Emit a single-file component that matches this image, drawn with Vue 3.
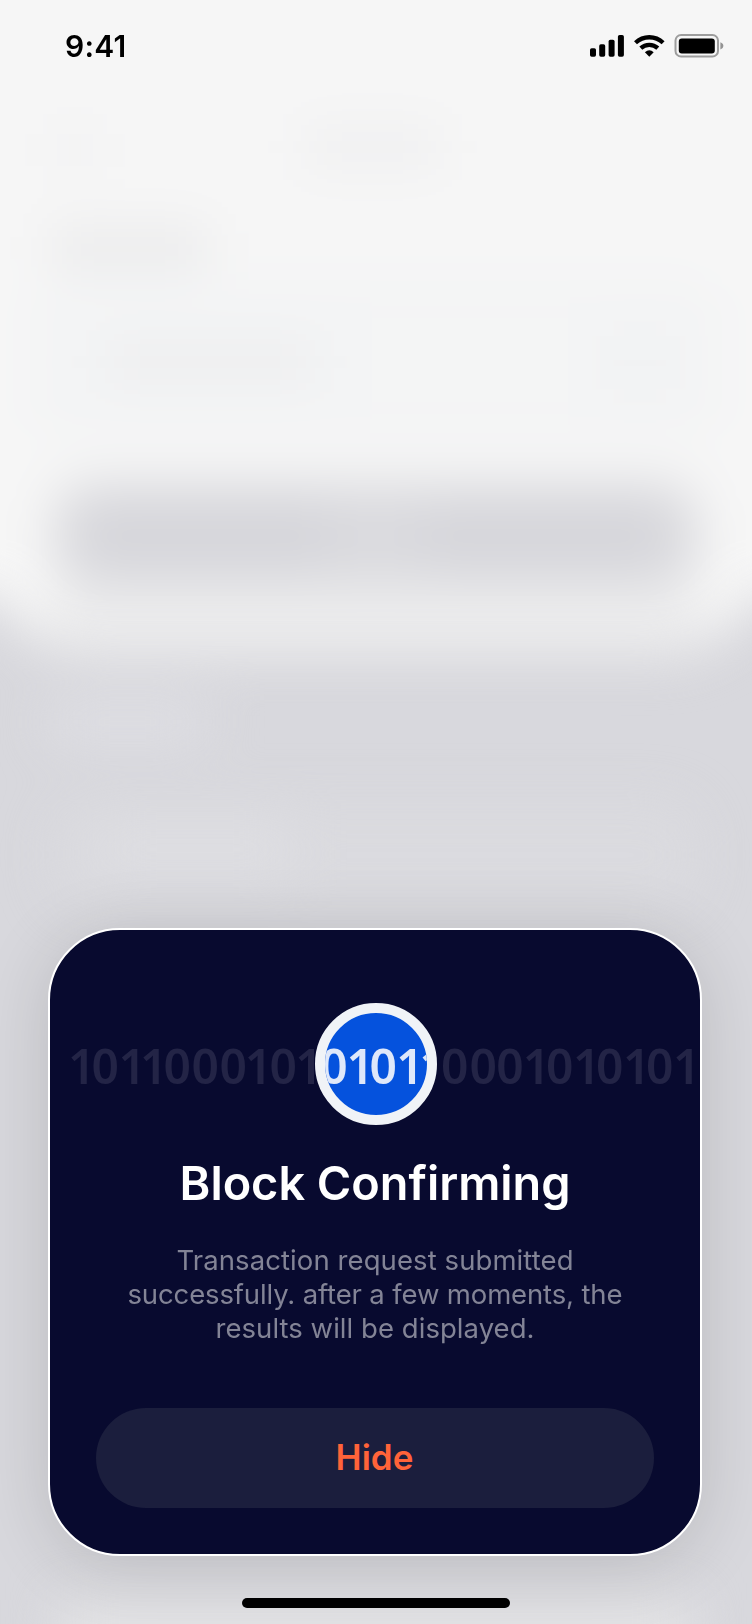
<script setup>
const leading = { text: '1011000101', x: '81.8 105.2 132.2 153.8 177.2 205.2 233.2 258.5 283.2 309' }
const trailing = { text: '0001010101', x: '454.8 483.2 510 536.6 559.8 586.8 609.8 636.8 659.8 686.8' }
const active = { text: '01011', x: '334 360.2 383.2 410 433' }
const lines = [
  { text: 'Transaction request submitted', width: 397 },
  { text: 'successfully. after a few moments, the', width: 495 },
  { text: 'results will be displayed.', width: 319 },
]
</script>

<template>
  <main class="screen">
    <svg class="backdrop" viewBox="0 0 752 1624" aria-hidden="true">
      <defs>
        <filter id="soft" x="-200" y="-200" width="1152" height="2024" filterUnits="userSpaceOnUse" color-interpolation-filters="sRGB">
          <feGaussianBlur stdDeviation="25" />
        </filter>
      </defs>
      <rect width="752" height="1624" fill="#d8d8dd" />
      <g filter="url(#soft)">
        <rect x="-200" y="-200" width="1152" height="700" fill="#f6f6f6" />
        <rect x="-10" y="300" width="772" height="350" rx="85" fill="#f4f4f4" />
        <rect x="-200" y="300" width="1152" height="295" fill="#f6f6f6" />
        <rect x="30" y="280" width="692" height="160" rx="40" fill="#f3f4f5" />
        <rect x="305" y="130" width="135" height="34" fill="#eeeeef" />
        <rect x="58" y="130" width="34" height="40" fill="#f0f0f1" />
        <rect x="52" y="230" width="155" height="36" fill="#e9e9ea" />
        <rect x="105" y="345" width="210" height="34" fill="#ededee" />
        <rect x="370" y="325" width="200" height="70" fill="#f4f5f5" />
        <rect x="620" y="335" width="40" height="56" fill="#f0f0f1" />
        <rect x="46" y="590" width="660" height="66" rx="30" fill="#ececed" />
        <rect x="54" y="484" width="644" height="102" rx="36" fill="#dadade" />
        <rect x="90" y="500" width="240" height="70" rx="30" fill="#d6d6db" />
        <rect x="422" y="500" width="240" height="70" rx="30" fill="#d6d6db" />
        <rect x="50" y="705" width="155" height="34" fill="#e0e0e5" />
        <rect x="100" y="825" width="190" height="44" fill="#dfdfe3" />
        <rect x="50" y="800" width="650" height="110" rx="40" fill="#dddde1" opacity=".5" />
        <rect x="60" y="1600" width="632" height="200" fill="#e3e3e5" />
      </g>
    </svg>

    <header class="status">
      <span class="time">9:41</span>
      <svg class="indicators" width="136" height="26" viewBox="589 33 136 26" aria-hidden="true">
        <rect x="590" y="48.2" width="6" height="8.5" rx="1.7" />
        <rect x="599.2" y="44.2" width="6" height="12.5" rx="1.7" />
        <rect x="608.6" y="39.8" width="6" height="16.9" rx="1.7" />
        <rect x="617.9" y="35" width="6" height="21.7" rx="1.7" />
        <g fill="none" stroke="#000" stroke-width="4.3">
          <path d="M635.5 42.7 A20.2 20.2 0 0 1 663.1 42.7" />
          <path d="M640.8 48.2 A12.5 12.5 0 0 1 657.8 48.2" />
        </g>
        <path d="M649.3 56.8 L644.9 52.3 Q649.3 48.2 653.7 52.3 Z" />
        <rect x="675.5" y="35" width="42.5" height="21.5" rx="5.6" fill="none" stroke="#000" stroke-opacity=".36" stroke-width="2" />
        <rect x="678.8" y="38.4" width="36" height="15" rx="3" />
        <path d="M720.4 42.2 Q723.4 43.3 723.4 45.9 Q723.4 48.4 720.4 49.5 Z" fill-opacity=".4" />
      </svg>
    </header>

    <section class="card">
      <svg class="blocks" width="650" height="126" viewBox="50 1001 650 126">
        <defs>
          <clipPath id="lens"><circle cx="376" cy="1064" r="51" /></clipPath>
        </defs>
        <text class="digits dim" y="1084" :x="leading.x">{{ leading.text }}</text>
        <text class="digits dim" y="1084" :x="trailing.x">{{ trailing.text }}</text>
        <circle cx="376" cy="1064" r="56" fill="#0552dd" stroke="#f0f3f7" stroke-width="10" />
        <g clip-path="url(#lens)">
          <text class="digits bright" y="1084" :x="active.x">{{ active.text }}</text>
        </g>
      </svg>
      <h1 class="title">Block Confirming</h1>
      <svg class="message" width="650" height="106" viewBox="50 1242 650 106">
        <text
          v-for="(line, i) in lines"
          :key="line.text"
          x="375"
          :y="1270 + i * 34"
          :textLength="line.width"
          text-anchor="middle"
        >{{ line.text }}</text>
      </svg>
      <button class="hide" type="button">Hide</button>
    </section>

    <div class="home"></div>
  </main>
</template>

<style>
body {
  margin: 0;
}
</style>

<style scoped>
.screen {
  position: relative;
  display: flex;
  flex-direction: column;
  width: 752px;
  height: 1624px;
  box-sizing: border-box;
  overflow: hidden;
  font-family: Inter, sans-serif;
}
.backdrop {
  position: absolute;
  inset: 0;
  width: 752px;
  height: 1624px;
}
.status {
  position: relative;
  display: flex;
  justify-content: space-between;
  align-items: center;
  height: 26px;
  padding: 33px 27px 0 65px;
}
.time {
  font: 600 30px/26px Inter, sans-serif;
  letter-spacing: 0.2px;
}
.indicators {
  display: block;
}
.card {
  position: relative;
  display: flex;
  flex-direction: column;
  align-items: center;
  box-sizing: border-box;
  width: 654px;
  height: 628px;
  margin: auto 0 42px 48px;
  padding-top: 71px;
  border: 2px solid #fff;
  border-radius: 72px;
  background: #080a2f;
  box-shadow: 0 8px 72px rgba(0, 0, 0, 0.14);
}
.blocks,
.message {
  display: block;
  flex: none;
}
.digits {
  font-family: 'Noto Sans', sans-serif;
  font-size: 48px;
  font-weight: 650;
  text-anchor: middle;
}
.dim {
  fill: #232446;
}
.bright {
  fill: #dfe8fa;
}
.title {
  margin: 26px 0 0;
  color: #fff;
  font-size: 46.8px;
  font-weight: 600;
  line-height: 60px;
  white-space: nowrap;
}
.message {
  margin-top: 29px;
}
.message text {
  fill: #838496;
  font-size: 27.5px;
}
.hide {
  width: 558px;
  height: 100px;
  margin-top: 60px;
  padding: 0 1px 2px 0;
  border: 0;
  border-radius: 50px;
  background: #1b1e3d;
  color: #ff6339;
  font: 600 35px/98px Inter, sans-serif;
}
.home {
  position: relative;
  width: 268px;
  height: 10px;
  margin: 0 0 16px 242px;
  border-radius: 5px;
  background: #000;
}
</style>
